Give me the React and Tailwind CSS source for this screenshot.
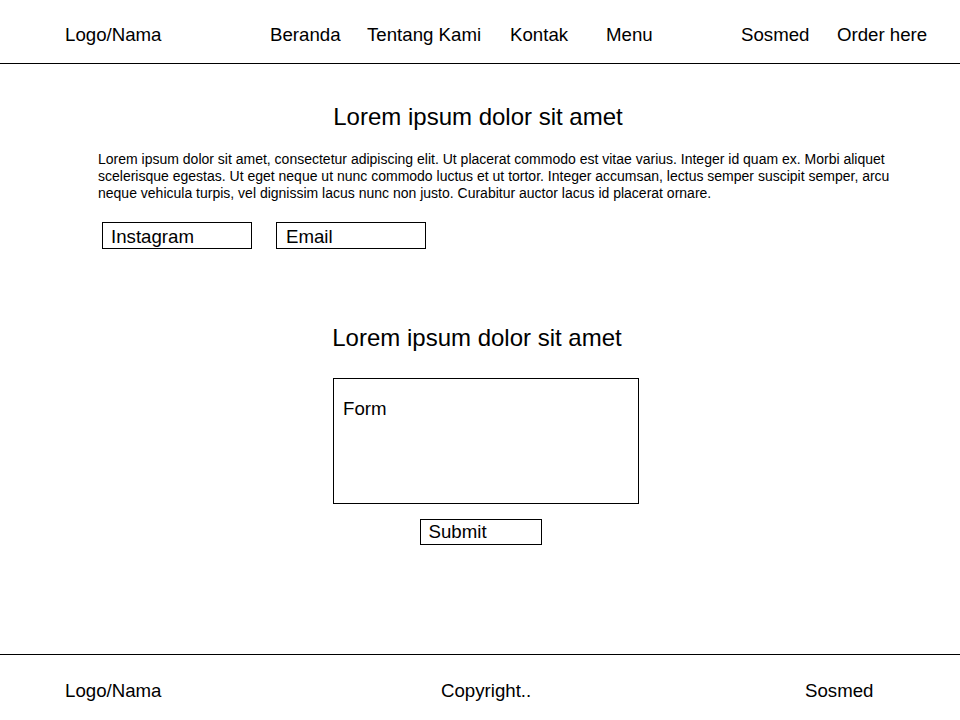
export default function App() {
  return (
    <div className="flex h-[720px] w-[960px] flex-col bg-white text-black font-['Liberation_Sans',Arial,sans-serif]">
      {/* Header */}
      <header className="flex h-[64px] items-center border-b border-black pl-[65px] pt-[7px] text-[18.67px]">
        <span className="w-[205px]">Logo/Nama</span>
        <nav className="flex">
          <a className="w-[97px]">Beranda</a>
          <a className="w-[143px]">Tentang Kami</a>
          <a className="w-[96px]">Kontak</a>
          <a className="w-[135px]">Menu</a>
        </nav>
        <span className="w-[96px]">Sosmed</span>
        <span>Order here</span>
      </header>

      {/* Main */}
      <main className="flex-1">
        <section className="pt-[38px]">
          <h2 className="pr-[4px] text-center text-[24px] leading-[30px]">Lorem ipsum dolor sit amet</h2>
          <p className="ml-[98px] mt-[19px] w-[800px] text-[14px] leading-[17px]">
            Lorem ipsum dolor sit amet, consectetur adipiscing elit. Ut placerat commodo est vitae varius. Integer id quam ex. Morbi aliquet scelerisque egestas. Ut eget neque ut nunc commodo luctus et ut tortor. Integer accumsan, lectus semper suscipit semper, arcu neque vehicula turpis, vel dignissim lacus nunc non justo. Curabitur auctor lacus id placerat ornare.
          </p>
          <div className="ml-[102px] mt-[20px] flex gap-[24px] text-[18.67px]">
            <div className="h-[27px] w-[150px] border border-black pl-[8px] pt-[1px] leading-[25px]">Instagram</div>
            <div className="h-[27px] w-[150px] border border-black pl-[9px] pt-[1px] leading-[25px]">Email</div>
          </div>
        </section>

        <section className="mt-[74px] flex flex-col items-center">
          <h2 className="pr-[6px] text-center text-[24px] leading-[30px]">Lorem ipsum dolor sit amet</h2>
          <div className="ml-[12px] mt-[25px] h-[126px] w-[306px] border border-black px-[9px] pt-[19px] text-[18.67px] leading-[22px]">
            Form
          </div>
          <button className="ml-[1px] mt-[15px] h-[26px] w-[122px] border border-black pl-[8px] text-left text-[18.67px] leading-[24px]">
            Submit
          </button>
        </section>
      </main>

      {/* Footer */}
      <footer className="flex h-[66px] items-center border-t border-black pl-[65px] pt-[6px] text-[18.67px]">
        <span className="w-[376px]">Logo/Nama</span>
        <span className="w-[364px]">Copyright..</span>
        <span>Sosmed</span>
      </footer>
    </div>
  );
}
